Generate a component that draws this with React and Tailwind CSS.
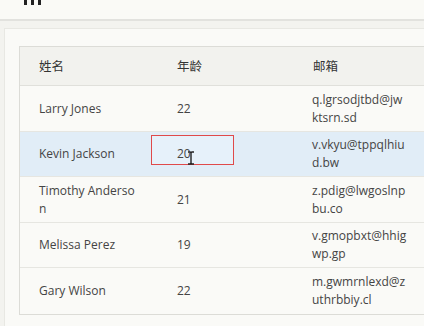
import React from "react";

const rows = [
  { name: "Larry Jones", age: "22", email: "q.lgrsodjtbd@jwktsrn.sd" },
  { name: "Kevin Jackson", age: "20", email: "v.vkyu@tppqlhiud.bw", active: true },
  { name: "Timothy Anderson", age: "21", email: "z.pdig@lwgoslnpbu.co" },
  { name: "Melissa Perez", age: "19", email: "v.gmopbxt@hhigwp.gp" },
  { name: "Gary Wilson", age: "22", email: "m.gwmrnlexd@zuthrbbiy.cl" },
];

function Cursor() {
  return (
    <svg width="8" height="14" viewBox="0 0 8 14" className="absolute left-[35px] top-[15px]">
      <path d="M1 1 H3 Q4 1 4 2.5 Q4 1 5 1 H7 M4 2.5 V11.5 M1 13 H3 Q4 13 4 11.5 Q4 13 5 13 H7" stroke="#222" strokeWidth="1.4" fill="none" />
    </svg>
  );
}

export default function App() {
  return (
    <div className="w-[424px] h-[326px] overflow-hidden bg-[#f3f3ef] font-['Open_Sans','Liberation_Sans',sans-serif]">
      <div className="h-[21px] bg-[#fafaf6] border-b-2 border-[#e2e2de] relative">
        <div className="absolute left-[24px] top-0 flex gap-[4px]">
          <div className="w-[3px] h-[5px] bg-[#222]" />
          <div className="w-[3px] h-[5px] bg-[#222]" />
          <div className="w-[3px] h-[5px] bg-[#222]" />
        </div>
      </div>
      <div className="ml-[4px] mt-[7px] h-[400px] bg-[#fafaf7] border-l border-t border-[#e8e8e3] pl-[14px] pt-[17px]">
        <div className="w-[420px] border border-[#dcdcd7] bg-[#fafaf7]">
          <div className="grid grid-cols-[137px_136px_1fr] h-[39px] items-center bg-[#f2f2ee] border-b border-[#e0e0db] text-[12.5px] text-[#333] font-['Noto_Sans_CJK_SC',sans-serif]">
            <div className="pl-[19px]">姓名</div>
            <div className="pl-[20px]">年龄</div>
            <div className="pl-[20px]">邮箱</div>
          </div>
          {rows.map((r, i) => (
            <div
              key={r.name}
              className={`grid grid-cols-[137px_136px_1fr] ${i % 2 === 0 ? "h-[46px]" : "h-[45px]"} items-center text-[12px] leading-[18px] text-[#444] ${i < rows.length - 1 ? "border-b border-[#e6e6e1]" : ""} ${r.active ? "bg-[#e1edf7]" : ""}`}
            >
              <div className="pl-[19px] pr-[17px] break-all">{r.name}</div>
              <div className="relative h-full flex items-center pl-[20px]">
                {r.active && (
                  <div className="absolute left-[-6px] top-[3px] w-[83px] h-[30px] border border-[#e04a4a] bg-[#e6f1fa]">
                    <Cursor />
                  </div>
                )}
                <span className="relative">{r.age}</span>
              </div>
              <div className="pl-[19px] w-[114px] break-all">{r.email}</div>
            </div>
          ))}
        </div>
      </div>
    </div>
  );
}
